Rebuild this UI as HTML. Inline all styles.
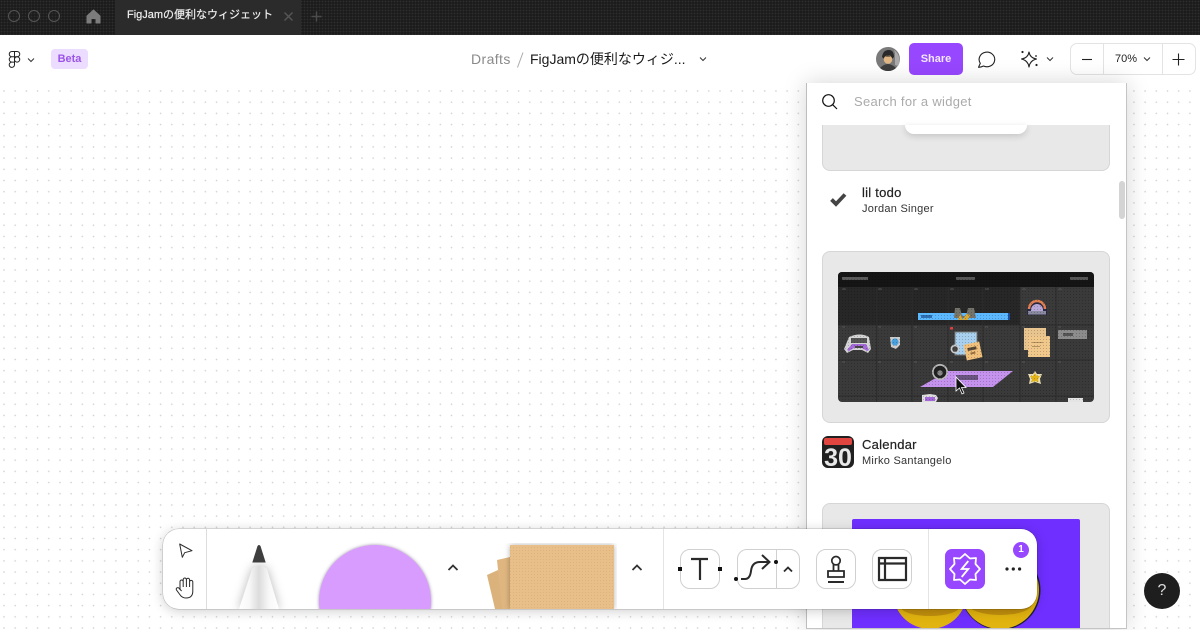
<!DOCTYPE html>
<html><head><meta charset="utf-8">
<style>
*{box-sizing:border-box;margin:0;padding:0}
html,body{width:1200px;height:630px;overflow:hidden;background:#fff;font-family:"Liberation Sans","Noto Sans CJK JP",sans-serif}
.a{position:absolute}
#canvas{left:0;top:83px;width:1200px;height:547px;background-color:#fff;background-image:radial-gradient(circle at 1px 1px,#d2d2d2 .6px,transparent 1px);background-size:11.2px 11.2px;background-position:3px 7px}
#top{left:0;top:0;width:1200px;height:35px;background-color:#1c1c1c;background-image:radial-gradient(circle,#2e2e2e .7px,transparent 1px);background-size:3px 3px}
#tab{left:115px;top:0;width:186px;height:35px;background:#2b2b2b}
.c{width:12px;height:12px;border:1px solid #555;border-radius:50%;top:10px}
#hdr{left:0;top:35px;width:1200px;height:48px;background:#fff}
#panel{left:806px;top:83px;width:321px;height:546px;background:#fff;border-left:1px solid #bdbdbd;border-right:1px solid #c4c4c4;border-bottom:1px solid #c4c4c4;box-shadow:0 0 22px rgba(0,0,0,.17);overflow:hidden}
.card{background:#e8e8e8;border:1px solid #d6d6d6;border-radius:8px}
#tb{left:163px;top:529px;width:874px;height:80px;background:#fff;border-radius:16px;box-shadow:0 0 0 .5px rgba(0,0,0,.22),0 2px 12px rgba(0,0,0,.2);overflow:hidden}
.btn{border:1px solid #d0d0d0;border-radius:10px;background:#fff;height:40px;top:20px}
.t{white-space:nowrap;line-height:1}
.m{-webkit-text-stroke:.2px currentColor}
</style></head><body>
<div id="canvas" class="a"></div>
<div id="top" class="a"></div>
<div id="tab" class="a"></div>
<div class="a c" style="left:8px"></div><div class="a c" style="left:28px"></div><div class="a c" style="left:48px"></div>
<svg class="a" style="left:86px;top:9px" width="15" height="15" viewBox="0 0 15 15"><path d="M7.500 1L1 7V14H5V9.500H10V14H14V7Z" fill="#7c7c7c" stroke="#7c7c7c" stroke-linejoin="round"/></svg>
<div class="a t m" style="left:127px;top:10px;font-size:11px;color:#eee">FigJamの便利なウィジェット</div>
<svg class="a" style="left:283px;top:11px" width="11" height="11"><path d="M1.500 1.500L9.500 9.500M9.500 1.500L1.500 9.500" stroke="#555" stroke-width="1.500"/></svg>
<svg class="a" style="left:311px;top:11px" width="11" height="11"><path d="M5.500 .5V10.500M.5 5.500H10.500" stroke="#4c4c4c" stroke-width="1.500"/></svg>

<div id="hdr" class="a"></div>
<svg class="a" style="left:8px;top:51px" width="14" height="17" viewBox="0 0 14 17" fill="none" stroke="#222" stroke-width="1"><path d="M6.500 .5H3.900a2.650 2.650 0 0 0 0 5.300H6.500ZM6.500 .5h2.600a2.650 2.650 0 0 1 0 5.300H6.500ZM6.500 5.800H3.900a2.650 2.650 0 0 0 0 5.300H6.500ZM6.500 11.100H3.900A2.650 2.650 0 1 0 6.500 13.750Z"/><circle cx="9.100" cy="8.450" r="2.650"/></svg>
<svg class="a" style="left:26px;top:56px" width="10" height="8" fill="none" stroke="#333" stroke-width="1"><path d="M2 2.500L5 5.500L8 2.500"/></svg>
<div class="a t" style="left:51px;top:49px;width:37px;height:20px;background:#ecdcff;border-radius:4px;color:#9b55e8;font-size:11px;font-weight:bold;text-align:center;line-height:20px">Beta</div>
<div class="a t" style="left:471px;top:52px;font-size:14px;color:#8a8a8a;letter-spacing:.4px">Drafts</div>
<svg class="a" style="left:516px;top:51px" width="9" height="18"><path d="M7 1.500L1.500 16.500" stroke="#aaa"/></svg>
<div class="a t" style="left:530px;top:52px;font-size:14px;color:#1a1a1a">FigJamの便利なウィジ...</div>
<svg class="a" style="left:698px;top:55px" width="10" height="8" fill="none" stroke="#333" stroke-width="1"><path d="M2 2.500L5 5.500L8 2.500"/></svg>

<svg class="a" style="left:876px;top:47px" width="24" height="24" viewBox="0 0 24 24"><circle cx="12" cy="12" r="12" fill="#7a7a7a"/><path d="M18 3a12 12 0 0 1 4 16l-3-1V6Z" fill="#aaa"/><path d="M6 10q1-7 6.500-7T18 10l-2 2H8Z" fill="#2a2a2a"/><circle cx="12" cy="12.500" r="4.300" fill="#e0b684"/><path d="M7.500 11q4.500-5 9 0l-1.500-1.500H9Z" fill="#1e1e1e"/><path d="M4 21q8-8 16 0a12 12 0 0 1-16 0Z" fill="#3d3d3d"/></svg>
<div class="a t" style="left:909px;top:43px;width:54px;height:32px;background:#9747ff;border-radius:5px;color:#f3e8ff;font-size:11px;font-weight:bold;text-align:center;line-height:32px">Share</div>
<svg class="a" style="left:977px;top:50px" width="20" height="18" viewBox="0 0 20 18" fill="none" stroke="#222" stroke-width="1.100"><path d="M1.500 17.300L3.300 13.300A7.800 7.300 0 1 1 6.500 16Q4 17.300 1.500 17.300Z" stroke-linejoin="round"/></svg>
<svg class="a" style="left:1019px;top:48px" width="20" height="20" viewBox="0 0 20 20" fill="none" stroke="#222" stroke-width="1.100"><path d="M10 4Q11 10 17.500 11Q11 12.500 10 19Q9 12.500 2.500 11Q9 10 10 4Z" stroke-linejoin="round"/><circle cx="3.500" cy="4" r="1.100" fill="#222" stroke="none"/><circle cx="17" cy="8" r=".9" fill="#222" stroke="none"/><circle cx="17.500" cy="17" r="1.100" fill="#222" stroke="none"/></svg>
<svg class="a" style="left:1045px;top:55px" width="10" height="8" fill="none" stroke="#333" stroke-width="1"><path d="M2 2.500L5 5.500L8 2.500"/></svg>
<div class="a" style="left:1070px;top:43px;width:126px;height:32px;border:1px solid #e3e3e3;border-radius:7px"></div>
<div class="a" style="left:1103px;top:44px;width:1px;height:30px;background:#e3e3e3"></div>
<div class="a" style="left:1162px;top:44px;width:1px;height:30px;background:#e3e3e3"></div>
<svg class="a" style="left:1081px;top:53px" width="12" height="12"><path d="M1 6.500H11" stroke="#222" stroke-width="1.100"/></svg>
<div class="a t" style="left:1115px;top:54px;font-size:11px;color:#222">70%</div>
<svg class="a" style="left:1142px;top:55px" width="10" height="8" fill="none" stroke="#333" stroke-width="1"><path d="M2 2.500L5 5.500L8 2.500"/></svg>
<svg class="a" style="left:1172px;top:53px" width="13" height="13"><path d="M6.500 .5V12.500M.5 6.500H12.500" stroke="#222" stroke-width="1.100"/></svg>

<div id="panel" class="a">
  <svg class="a" style="left:14px;top:10px" width="18" height="18" fill="none" stroke="#111" stroke-width="1.200"><circle cx="7.500" cy="7.500" r="5.800"/><path d="M11.700 11.700L16 16"/></svg>
  <div class="a t" style="left:47px;top:12px;font-size:13px;color:#aaa;letter-spacing:.3px">Search for a widget</div>
  <div class="a card" style="left:15px;top:42px;width:288px;height:46px;border-top:0;border-radius:0 0 8px 8px"></div>
  <div class="a" style="left:98px;top:42px;width:122px;height:9px;background:#fff;border-radius:0 0 9px 9px;box-shadow:0 2px 7px rgba(0,0,0,.16)"></div>
  <svg class="a" style="left:21px;top:108px" width="20" height="17"><path d="M3.500 8.500L8 13L17 3.500" fill="none" stroke="#444" stroke-width="3.800"/></svg>
  <div class="a t m" style="left:55px;top:103px;font-size:13px;color:#222;letter-spacing:.25px">lil todo</div>
  <div class="a t" style="left:55px;top:121px;font-size:11px;color:#333;letter-spacing:.25px">Jordan Singer</div>
  <div class="a" style="left:312px;top:98px;width:6px;height:38px;background:#d4d4d4;border-radius:3px"></div>

  <div class="a card" style="left:15px;top:168px;width:288px;height:172px"></div>
  <svg class="a" style="left:31px;top:189px" width="256" height="130" viewBox="0 0 256 130">
    <defs><clipPath id="cp"><rect width="256" height="130" rx="4"/></clipPath>
    <pattern id="dd" width="3" height="3" patternUnits="userSpaceOnUse"><rect x="1" y="1" width="1" height="1" fill="#000" opacity=".2"/></pattern></defs>
    <g clip-path="url(#cp)">
      <rect width="256" height="130" fill="#3a3a3a"/>
      <rect width="256" height="15" fill="#151515"/>
      <rect y="15" width="182" height="38" fill="#272727"/>
      <path d="M0 53H256M0 88H256M0 124H256M38.700 15V130M74 15V130M110 15V130M145 15V130M182 15V130M218 15V130" stroke="#2c2c2c"/>
      <rect x="4" y="5" width="26" height="3" fill="#5a5a5a"/><rect x="118" y="5" width="19" height="3" fill="#555"/><rect x="232" y="5" width="18" height="3" fill="#555"/>
      <path d="M4 17h4M40 17h4M76 17h4M112 17h4M147 17h4M184 17h4M220 17h4M4 55h3M40 55h3M76 55h3M147 55h3M184 55h3M220 55h3M4 90h3M40 90h3M76 90h3M112 90h3M147 90h3M184 90h3M220 90h3" stroke="#555"/>
      <rect x="80" y="41" width="90" height="7" fill="#5cb8ff"/><rect x="170" y="41" width="2" height="7" fill="#1d4e9e"/><rect x="83" y="43" width="11" height="3" fill="#2d6fb0"/>
      <path d="M117 36h5l2 8h4l2-8h6l2 10h-22Z" fill="#75746a"/><path d="M122 42l3 6 3-6 4 1-2 5h-10Z" fill="#dba830"/>
      <path d="M189 38a10 10 0 0 1 20 0v5h-20Z" fill="#2a2a44"/><path d="M191 37a8 8 0 0 1 16 0" fill="none" stroke="#e08050" stroke-width="2.500"/><path d="M193 38a6 6 0 0 1 12 0v1h-12Z" fill="#b8a8d8"/><rect x="190" y="39" width="18" height="3.500" fill="#8a8aa0"/>
      <path d="M11 65q11-5 20 0l2 12-3 4-6-3h-9l-6 3-3-4Z" fill="#d4d4d4"/><path d="M14 72h14l3 6-2 1-5-3h-8l-5 3-2-1Z" fill="#a468d8"/><rect x="13" y="66" width="16" height="5" fill="#555"/><rect x="17" y="74" width="8" height="2" fill="#444"/>
      <path d="M52 65h10v8l-4 4-5-2Z" fill="#ccc"/><circle cx="57" cy="70" r="3.600" fill="#4aa0dc"/>
      <rect x="117" y="60" width="22" height="23" fill="#a8d0ee"/><rect x="117" y="60" width="22" height="23" fill="none" stroke="#777"/>
      <circle cx="117" cy="77" r="4.500" fill="#ccc"/><circle cx="117" cy="77" r="2.800" fill="#444"/>
      <rect x="112" y="55" width="3" height="2.500" fill="#e04040"/>
      <g transform="rotate(-12 135 79)"><rect x="127" y="71" width="16" height="16" fill="#f0c07c"/><rect x="130" y="75" width="9" height="3" fill="#5a4a3a"/><rect x="132" y="80" width="5" height="2" fill="#9a7040"/></g>
      <rect x="186" y="56" width="22" height="22" fill="#e8c48f"/><rect x="190" y="64" width="22" height="21" fill="#f0c88c"/><rect x="194" y="70" width="11" height="1" fill="#b59060"/><rect x="194" y="74" width="8" height="1" fill="#b59060"/>
      <rect x="220" y="58" width="29" height="9" fill="#8c8c8c"/><rect x="225" y="61" width="10" height="3" fill="#555"/>
      <path d="M82 115L110 99H175L155 115Z" fill="#c593ee"/><rect x="118" y="103" width="22" height="5" fill="#6a5580"/>
      <circle cx="102" cy="100" r="8" fill="#bbb"/><circle cx="102" cy="100" r="6.300" fill="#222"/><circle cx="102" cy="101" r="2.700" fill="#888"/>
      <path d="M197 99l2 3h5l-2 5 1 5-6-2-6 2 1-5-2-5h5Z" fill="#eadfb8"/><path d="M197 101l2 3h3l-2 3 .5 3-3.500-1-3.500 1 .5-3-2-3h3Z" fill="#e2b417"/>
      <path d="M84 123l8-1 6 1 2 3-2 4H84Z" fill="#ddd"/><rect x="87" y="125" width="10" height="4" fill="#a468d8"/>
      <rect x="230" y="126" width="15" height="4" fill="#e4e4e4"/>
      <rect width="256" height="130" fill="url(#dd)"/>
      <path d="M118 105V119L121.500 116L124 122L126 121L123.500 115.500H128Z" fill="#111" stroke="#fff" stroke-width=".8"/>
    </g>
  </svg>
  <svg class="a" style="left:15px;top:353px" width="32" height="32" viewBox="0 0 32 32"><rect width="32" height="32" rx="6" fill="#202020"/><rect x="2" y="2" width="28" height="7" rx="2" fill="#e04540"/><text x="16" y="30" text-anchor="middle" font-family="Liberation Sans" font-weight="bold" font-size="25" fill="#e8e8e8">30</text></svg>
  <div class="a t m" style="left:55px;top:355px;font-size:13px;color:#222;letter-spacing:.25px">Calendar</div>
  <div class="a t" style="left:55px;top:373px;font-size:11px;color:#333;letter-spacing:.25px">Mirko Santangelo</div>

  <div class="a card" style="left:15px;top:420px;width:288px;height:140px"></div>
  <div class="a" style="left:45px;top:436px;width:228px;height:120px;background:#6f2fff;border-radius:2px 2px 0 0"></div>
  <svg class="a" style="left:0;top:0" width="319" height="545">
    <g transform="translate(-807 -83)">
      <circle cx="1000.500" cy="590" r="40" fill="#1c1c40"/>
      <circle cx="930" cy="592" r="37" fill="#e2b40f"/><circle cx="1000" cy="590" r="39" fill="#e2b40f"/>
      <ellipse cx="930" cy="606" rx="30" ry="10" fill="#c2900d"/><ellipse cx="1000" cy="604" rx="32" ry="11" fill="#c2900d"/>
    </g>
  </svg>
</div>

<div id="tb" class="a">
  <div class="a" style="left:43px;top:0;width:1px;height:80px;background:#ddd"></div>
  <div class="a" style="left:500px;top:0;width:1px;height:80px;background:#e4e4e4"></div>
  <div class="a" style="left:765px;top:0;width:1px;height:80px;background:#e4e4e4"></div>

  <svg class="a" style="left:60px;top:10px" width="72" height="70" viewBox="0 0 72 70">
    <defs><linearGradient id="pen" x1="0" x2="1"><stop offset="0" stop-color="#fff"/><stop offset=".25" stop-color="#f8f8f8"/><stop offset=".5" stop-color="#dcdcdc"/><stop offset=".75" stop-color="#f8f8f8"/><stop offset="1" stop-color="#fff"/></linearGradient></defs>
    <path d="M16 70L29 30Q36 23 44 30L56 70Z" fill="url(#pen)" style="filter:drop-shadow(0 0 5px rgba(0,0,0,.28))"/>
    <path d="M29.300 23.500L34.500 7Q36 5 37.500 7L42.700 23.500Z" fill="#3e3e3e"/>
  </svg>
  <div class="a" style="left:156px;top:16px;width:112px;height:112px;border-radius:50%;background:#d89cff;box-shadow:0 0 3px rgba(60,30,80,.5)"></div>
  <svg class="a" style="left:284px;top:34px" width="12" height="10" fill="none" stroke="#333" stroke-width="1.800"><path d="M1.500 7L6 2.500L10.500 7"/></svg>
  <svg class="a" style="left:322px;top:14px" width="132" height="66" viewBox="0 0 132 66">
    <defs><pattern id="st" width="3" height="3" patternUnits="userSpaceOnUse"><rect x="1" y="1" width="1" height="1" fill="#c89a5c" opacity=".3"/></pattern></defs>
    <path d="M2 32L13 27L25 66H10Z" fill="#dcb27c"/>
    <path d="M12 17L25 14V66H17Z" fill="#e0b680"/>
    <rect x="25" y="2" width="104" height="64" fill="#e8bf88" style="filter:drop-shadow(0 0 3px rgba(0,0,0,.3))"/>
    <rect x="25" y="2" width="104" height="64" fill="url(#st)"/>
  </svg>
  <svg class="a" style="left:468px;top:34px" width="12" height="10" fill="none" stroke="#333" stroke-width="1.800"><path d="M1.500 7L6 2.500L10.500 7"/></svg>

  <div class="a btn" style="left:517px;width:40px"></div>
  <div class="a btn" style="left:574px;width:63px"></div>
  <div class="a" style="left:613px;top:21px;width:1px;height:38px;background:#d0d0d0"></div>
  <div class="a btn" style="left:653px;width:40px"></div>
  <div class="a btn" style="left:709px;width:40px"></div>
  <div class="a" style="left:782px;top:20px;width:40px;height:40px;background:#9747ff;border-radius:7px"></div>
  <div class="a t" style="left:850px;top:13px;width:16px;height:16px;background:#9747ff;border-radius:50%;color:#fff;font-size:10px;font-weight:bold;text-align:center;line-height:16px">1</div>
</div>

<svg class="a" style="left:0;top:0" width="1200" height="630" fill="none" stroke="#2a2a2a">
  <path d="M179.700 544L192 550.700L184.700 552.700L182.300 557.300Z" stroke-width="1" stroke-linejoin="round"/>
  <path d="M180 590V581.600a1.600 1.600 0 0 1 3.200 0V587M183.200 587V579.600a1.600 1.600 0 0 1 3.200 0V587M186.400 587V579.800a1.600 1.600 0 0 1 3.200 0V587M189.600 587V582a1.600 1.600 0 0 1 3.200 0V591q0 7-6.800 7q-4 0-6.200-3.500l-3.300-4.500q-.8-1.500.6-2.200q1.200-.5 2.200.7l2.300 2.500" fill="#fff" stroke-width="1"/>
  <path d="M691 559H708M700 559V580" stroke-width="2.200"/>
  <rect x="678" y="567" width="4" height="4" fill="#111" stroke="none"/><rect x="718" y="567" width="4" height="4" fill="#111" stroke="none"/>
  <circle cx="736" cy="579" r="2" fill="#111" stroke="none"/>
  <circle cx="776" cy="562" r="2" fill="#111" stroke="none"/>
  <path d="M741 579H745Q750 579 751 571Q752 562 760 562H769M762 555L769.500 562L762 569" stroke-width="2"/>
  <path d="M784 571.500L788 567.500L792 571.500" stroke-width="1.800"/>
  <circle cx="836" cy="560.700" r="4.200" stroke-width="1.700"/>
  <path d="M833.500 564.500V571M838.500 564.500V571M828 571H844V577H828Z" stroke-width="1.800"/>
  <path d="M828 582H844" stroke-width="2"/>
  <path d="M879 558H906V580H879ZM879 563.500H906M885 558V580" stroke-width="2.200"/>
  <path d="M965 554L970 558.500L976 558L975.500 564L980 569L975.500 574L976 580L970 579.500L965 584L960 579.500L954 580L954.500 574L950 569L954.500 564L954 558L960 558.500Z" stroke="#fff" stroke-width="1.800" stroke-linejoin="round"/>
  <path d="M968.300 561L961.700 569H968.300L961.700 577" stroke="#fff" stroke-width="1.800"/>
  <circle cx="1007" cy="569" r="1.600" fill="#222" stroke="none"/><circle cx="1013.300" cy="569" r="1.600" fill="#222" stroke="none"/><circle cx="1019.600" cy="569" r="1.600" fill="#222" stroke="none"/>
</svg>
<div class="a t" style="left:1144px;top:573px;width:36px;height:36px;border-radius:50%;background:#1e1e1e;color:#ddd;font-size:16px;text-align:center;line-height:36px">?</div>
</body></html>
